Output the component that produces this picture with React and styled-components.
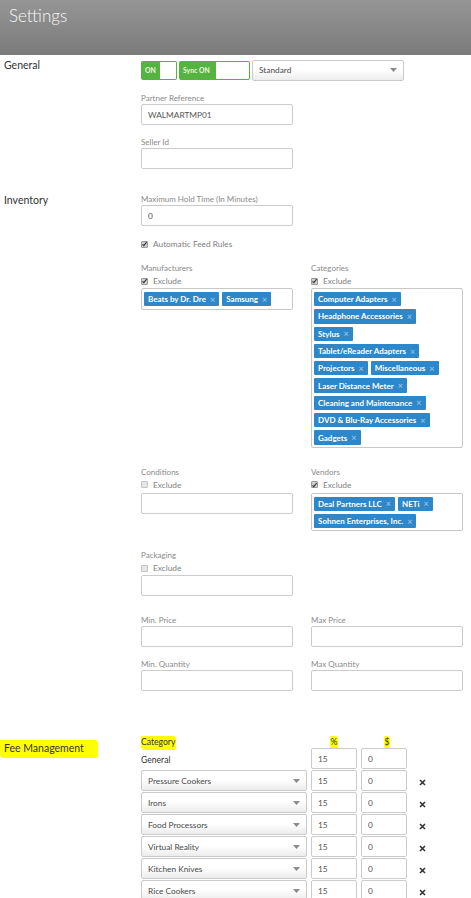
import React from "react";
import styled, { createGlobalStyle } from "styled-components";

const Global = createGlobalStyle`
  html, body { margin: 0; padding: 0; background: #fff; }
  body {
    font-family: Lato, "Open Sans", "Liberation Sans", Arial, sans-serif;
    color: #333;
  }
  * { box-sizing: border-box; }
`;

const Header = styled.header`
  height: 55px;
  background: linear-gradient(#959595, #7b7b7b);
  padding: 6px 9px 0;
`;

const Title = styled.h1`
  margin: 0;
  font-weight: 300;
  font-size: 17px;
  line-height: 20px;
  color: #f6f6f6;
`;

const Section = styled.section`
  display: grid;
  grid-template-columns: 137px 322px;
  padding-left: 4px;
  margin-top: ${(p) => p.$top}px;
  align-items: start;
`;

const SectionTitle = styled.div`
  font-size: 10.5px;
  line-height: 13px;
  color: #333;
  margin-top: ${(p) => p.$shift || 0}px;
`;

const Marked = styled.span`
  display: inline-block;
  background: #ffff00;
  margin-left: ${(p) => p.$pull || 0}px;
  padding: ${(p) => p.$pad || "2px 2px"};
  border-radius: 1px 3px 2px 4px;
`;

const Column = styled.div`
  display: flex;
  flex-direction: column;
`;

const ToggleRow = styled.div`
  display: flex;
  align-items: center;
  gap: 2px;
  height: 20px;
`;

const Toggle = styled.div`
  display: flex;
  align-items: center;
  justify-content: space-between;
  width: ${(p) => p.$w}px;
  height: 19px;
  padding: 1px;
  background: #55b33f;
  border-radius: 2px;
`;

const ToggleText = styled.span`
  padding-left: 3px;
  font-size: 6.8px;
  font-weight: 700;
  color: #eef7e2;
`;

const Knob = styled.span`
  width: ${(p) => p.$w}px;
  height: 17px;
  background: #fff;
  border-radius: 1px;
`;

const SelectBox = styled.div`
  display: flex;
  align-items: center;
  justify-content: space-between;
  width: ${(p) => p.$w || 152}px;
  height: ${(p) => p.$h || 21}px;
  padding: 0 6px;
  border: 1px solid #cacaca;
  border-radius: 2px;
  background: linear-gradient(#ffffff 45%, #ececec);
  font-size: 8.3px;
  color: #4a4a4a;
`;

const Caret = () => (
  <svg width="7" height="4" viewBox="0 0 7 4">
    <path d="M0 0h7L3.5 4z" fill="#8a8a8a" />
  </svg>
);

const Field = styled.div`
  display: flex;
  flex-direction: column;
  margin-top: ${(p) => p.$top || 0}px;
`;

const FieldLabel = styled.div`
  font-size: 8px;
  line-height: 10px;
  color: #8a8a8a;
  margin-bottom: ${(p) => p.$gap ?? 1}px;
`;

const TextInput = styled.input`
  width: 152px;
  height: 21px;
  padding: 0 6px;
  border: 1px solid #cbcbcb;
  border-radius: 2px;
  font: inherit;
  font-size: 8.3px;
  color: #555;
  background: #fff;
  outline: none;
`;

const CheckRow = styled.div`
  display: flex;
  align-items: center;
  gap: 5px;
  height: 10px;
  margin-top: ${(p) => p.$top || 0}px;
  margin-bottom: ${(p) => p.$bottom || 0}px;
  font-size: 8.3px;
  color: #808080;
`;

const CheckBox = styled.span`
  display: inline-flex;
  align-items: center;
  justify-content: center;
  width: 7px;
  height: 7px;
  border: 1px solid ${(p) => (p.$on ? "#9a9a9a" : "#c4c4c4")};
  border-radius: 1px;
  background: ${(p) => (p.$on ? "#cfcfcf" : "#e6e6e6")};
`;

const Check = ({ on }) => (
  <CheckBox $on={on}>
    {on && (
      <svg width="6" height="6" viewBox="0 0 6 6">
        <path d="M0.6 3.4L2.2 5L5.6 0.6" stroke="#333" strokeWidth="1.3" fill="none" />
      </svg>
    )}
  </CheckBox>
);

const Pair = styled.div`
  display: grid;
  grid-template-columns: 152px 152px;
  column-gap: 18px;
  align-items: start;
  margin-top: ${(p) => p.$top || 0}px;
`;

const TagBox = styled.div`
  display: flex;
  flex-wrap: wrap;
  align-content: flex-start;
  gap: 3px;
  width: 152px;
  min-height: 22px;
  padding: 3px 10px 2px 2px;
  border: 1px solid #c8c8c8;
  border-radius: 2px;
  background: #fff;
`;

const Tag = styled.span`
  display: inline-flex;
  align-items: center;
  height: 14.3px;
  padding: 0 4px 0 4px;
  background: #2d87c8;
  border-radius: 1px;
  color: #fff;
  font-size: 8px;
  font-weight: 700;
  white-space: nowrap;
`;

const TagRemove = styled.span`
  margin-left: 4px;
  color: #8dbde6;
  font-size: 9px;
  font-weight: 700;
  line-height: 1;
`;

const FeeGrid = styled.div`
  display: grid;
  grid-template-columns: 166px 46px 46px 20px;
  column-gap: 4px;
  row-gap: 1px;
  align-items: center;
`;

const FeeHead = styled.div`
  height: 11px;
  display: flex;
  align-items: flex-start;
  justify-content: ${(p) => (p.$center ? "center" : "flex-start")};
  padding-left: ${(p) => p.$nudge || 0}px;
  font-size: 8.6px;
  line-height: 12px;
  color: #333;
`;

const FeeName = styled.div`
  font-size: 8.6px;
  color: #333;
  padding-top: 2px;
`;

const FeeInput = styled(TextInput)`
  width: 46px;
`;

const Remove = styled.span`
  display: flex;
  justify-content: flex-start;
  padding-left: 8px;
  padding-top: 3px;
`;

const Cross = () => (
  <svg width="7" height="7" viewBox="0 0 7 7">
    <path d="M1 1L6 6M6 1L1 6" stroke="#333" strokeWidth="1.6" />
  </svg>
);

const Tags = ({ items }) => (
  <TagBox>
    {items.map((t) => (
      <Tag key={t}>
        {t}
        <TagRemove>×</TagRemove>
      </Tag>
    ))}
  </TagBox>
);

const manufacturers = ["Beats by Dr. Dre", "Samsung"];
const categories = [
  "Computer Adapters",
  "Headphone Accessories",
  "Stylus",
  "Tablet/eReader Adapters",
  "Projectors",
  "Miscellaneous",
  "Laser Distance Meter",
  "Cleaning and Maintenance",
  "DVD & Blu-Ray Accessories",
  "Gadgets",
];
const vendors = ["Deal Partners LLC", "NETi", "Sohnen Enterprises, Inc."];
const fees = [
  "Pressure Cookers",
  "Irons",
  "Food Processors",
  "Virtual Reality",
  "Kitchen Knives",
  "Rice Cookers",
];

export default function App() {
  return (
    <>
      <Global />
      <Header>
        <Title>Settings</Title>
      </Header>

      <Section $top={5}>
        <SectionTitle $shift={-1}>General</SectionTitle>
        <Column>
          <ToggleRow>
            <Toggle $w={36}>
              <ToggleText>ON</ToggleText>
              <Knob $w={16} />
            </Toggle>
            <Toggle $w={71}>
              <ToggleText>Sync ON</ToggleText>
              <Knob $w={33} />
            </Toggle>
            <SelectBox>
              Standard
              <Caret />
            </SelectBox>
          </ToggleRow>
          <Field $top={13}>
            <FieldLabel>Partner Reference</FieldLabel>
            <TextInput defaultValue="WALMARTMP01" readOnly />
          </Field>
          <Field $top={12}>
            <FieldLabel>Seller Id</FieldLabel>
            <TextInput readOnly />
          </Field>
        </Column>
      </Section>

      <Section $top={25}>
        <SectionTitle>Inventory</SectionTitle>
        <Column>
          <Field>
            <FieldLabel>Maximum Hold Time (In Minutes)</FieldLabel>
            <TextInput defaultValue="0" readOnly />
          </Field>
          <CheckRow $top={13}>
            <Check on />
            Automatic Feed Rules
          </CheckRow>

          <Pair $top={14}>
            <Field>
              <FieldLabel $gap={3}>Manufacturers</FieldLabel>
              <CheckRow $bottom={2}>
                <Check on />
                Exclude
              </CheckRow>
              <Tags items={manufacturers} />
            </Field>
            <Field>
              <FieldLabel $gap={3}>Categories</FieldLabel>
              <CheckRow $bottom={2}>
                <Check on />
                Exclude
              </CheckRow>
              <Tags items={categories} />
            </Field>
          </Pair>

          <Pair $top={19}>
            <Field>
              <FieldLabel $gap={3}>Conditions</FieldLabel>
              <CheckRow $bottom={3}>
                <Check />
                Exclude
              </CheckRow>
              <TextInput readOnly />
            </Field>
            <Field>
              <FieldLabel $gap={3}>Vendors</FieldLabel>
              <CheckRow $bottom={3}>
                <Check on />
                Exclude
              </CheckRow>
              <Tags items={vendors} />
            </Field>
          </Pair>

          <Field $top={19}>
            <FieldLabel $gap={3}>Packaging</FieldLabel>
            <CheckRow $bottom={2}>
              <Check />
              Exclude
            </CheckRow>
            <TextInput readOnly />
          </Field>

          <Pair $top={19}>
            <Field>
              <FieldLabel>Min. Price</FieldLabel>
              <TextInput readOnly />
            </Field>
            <Field>
              <FieldLabel>Max Price</FieldLabel>
              <TextInput readOnly />
            </Field>
          </Pair>
          <Pair $top={12}>
            <Field>
              <FieldLabel>Min. Quantity</FieldLabel>
              <TextInput readOnly />
            </Field>
            <Field>
              <FieldLabel>Max Quantity</FieldLabel>
              <TextInput readOnly />
            </Field>
          </Pair>
        </Column>
      </Section>

      <Section $top={45}>
        <SectionTitle $shift={4}>
          <Marked $pull={-4} $pad="2px 14px 3px 4px">Fee Management</Marked>
        </SectionTitle>
        <FeeGrid>
          <FeeHead>
            <Marked $pad="0 1px 2px 0">Category</Marked>
          </FeeHead>
          <FeeHead $center>
            <Marked $pad="0 1px 2px 1px">%</Marked>
          </FeeHead>
          <FeeHead $center $nudge={6}>
            <Marked $pad="0 1px 2px 1px">$</Marked>
          </FeeHead>
          <span />

          <FeeName>General</FeeName>
          <FeeInput defaultValue="15" readOnly />
          <FeeInput defaultValue="0" readOnly />
          <span />

          {fees.map((name) => (
            <React.Fragment key={name}>
              <SelectBox $w={166}>
                {name}
                <Caret />
              </SelectBox>
              <FeeInput defaultValue="15" readOnly />
              <FeeInput defaultValue="0" readOnly />
              <Remove>
                <Cross />
              </Remove>
            </React.Fragment>
          ))}
        </FeeGrid>
      </Section>
    </>
  );
}
